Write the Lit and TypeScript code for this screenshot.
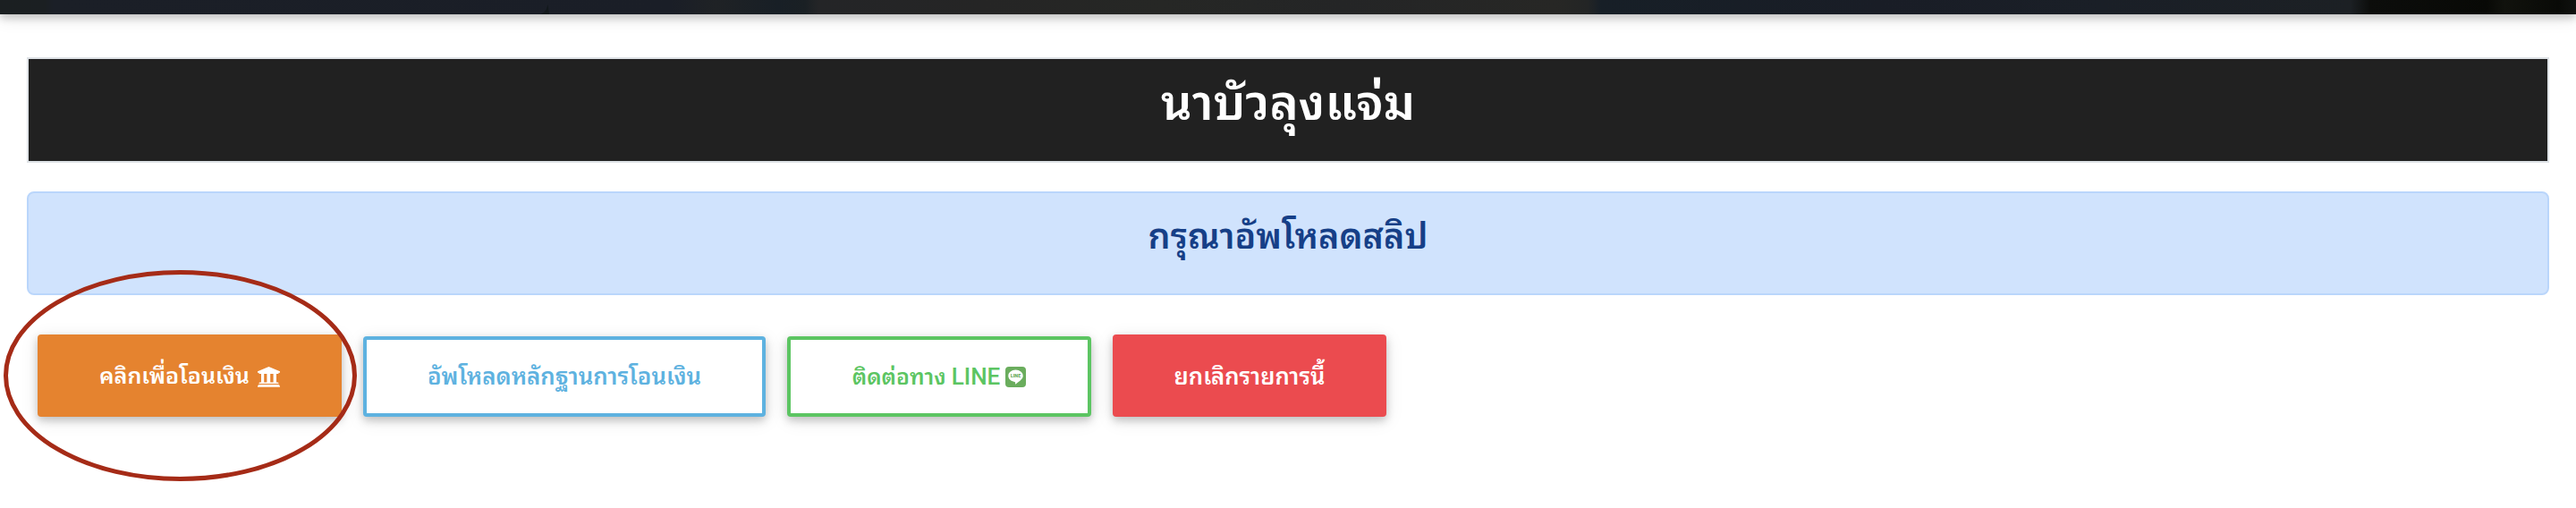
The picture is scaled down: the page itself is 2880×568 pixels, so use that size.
import { LitElement, html, css, svg } from "lit";
import { customElement } from "lit/decorators.js";

const bankIcon = svg`<path d="M12.5 0 L25 5.2 V6.8 H23.4 V8 H1.6 V6.8 H0 V5.2Z M4 8 H7.2 V17.6 H10.4 V8 H14.2 V17.6 H17.6 V8 H21 V17.6 H22.4 Q23.6 17.8 23.6 19 H1.4 Q1.4 17.8 2.6 17.6 H4Z M1.4 20 H23.6 Q25 20.4 25 22.8 H0 Q0 20.4 1.4 20Z" fill="#fff"/>`;

const lineIcon = svg`
  <rect width="23" height="23" rx="4" fill="#6aad5d"/>
  <path d="M11.5 3.6 C16 3.6 19.7 6.6 19.7 10.3 C19.7 13.4 16.8 15.8 11.6 19.4 C10.9 19.8 11 19.2 11.1 18.6 C11.3 17.4 11.1 17.1 10.3 16.9 C6.2 16.4 3.3 13.6 3.3 10.3 C3.3 6.6 7 3.6 11.5 3.6Z" fill="#fff"/>
  <text x="11.5" y="12.3" text-anchor="middle" textLength="11.4" lengthAdjust="spacingAndGlyphs" font-family="Roboto, sans-serif" font-weight="900" font-size="5.4" fill="#6aad5d">LINE</text>`;

@customElement("app-root")
export class AppRoot extends LitElement {
  static styles = css`
    :host { display: block; position: relative; height: 568px; overflow: hidden; background: #fff;
      font-family: Roboto, "Noto Sans Thai Looped", sans-serif; }
    * { box-sizing: border-box; }
    .nav { height: 16px; background: linear-gradient(90deg, #1b1f21 0, #1b1f22 50px, #1b1f27 60px, #1a1e27 750px, #1f2225 800px, #181f26 870px, #1a2024 900px, #242527 915px, #252525 1100px, #262725 1300px, #242526 1500px, #272725 1740px, #232525 1775px, #171f27 1790px, #191d26 2100px, #1a1f27 2350px, #1c2024 2628px, #0c0d0b 2650px, #080906 2780px, #11120d 2800px, #090a07 2860px, #10110f 2880px);
      box-shadow: 0 4px 10px rgba(0,0,0,.2), 0 4px 20px rgba(0,0,0,.1); }
    .nav svg { display: block; margin-left: 604px; }
    .content { display: flex; flex-direction: column; padding: 48px 30px 0; }
    .title { height: 118px; margin: 0; border: 2px solid #dee2e6; background: #212121; color: #fff; text-align: center;
      font-size: 54.6px; line-height: 98px; font-weight: 600; }
    .alert { height: 116px; margin-top: 32px; border: 2px solid #bad6fb; border-radius: 8px; background: #d0e3fd; color: #163f87;
      text-align: center; font-size: 39.4px; line-height: 97px; font-weight: 600; }
    .actions { display: flex; align-items: flex-end; gap: 24px; padding: 44px 12px 0; }
    .btn { display: flex; align-items: center; justify-content: center; height: 92px; border: 0; border-radius: 4px;
      box-shadow: 0 4px 10px rgba(0,0,0,.2), 0 4px 20px rgba(0,0,0,.1); color: #fff; font-family: inherit; font-weight: 600;
      font-size: 25.6px; line-height: 40px; white-space: nowrap; padding: 0; }
    .transfer { width: 340px; background: #e5832f; gap: 9px; font-size: 25.1px; padding-top: 2px; }
    .upload { width: 450px; height: 90px; border: 4px solid #5eb2e0; color: #5eb2e0; background: #fff; font-size: 25.8px; }
    .line { width: 340px; height: 90px; border: 4px solid #5cc562; color: #5cc562; background: #fff; gap: 6px; font-size: 24.8px; }
    .cancel { width: 306px; background: #eb4b4f; padding-top: 2px; }
    .latin { font-weight: 500; font-size: 26px; }
    .ring { position: absolute; left: 4px; top: 302px; }
  `;
  render() {
    return html`
      <div class="nav"><svg width="14" height="16"><path d="M8.5 5 L10 16 H0 Q5 14 7 10Z" fill="#12181b"/></svg></div>
      <main class="content">
        <h1 class="title">นาบัวลุงแจ่ม</h1>
        <div class="alert">กรุณาอัพโหลดสลิป</div>
        <div class="actions">
          <button class="btn transfer"><span>คลิกเพื่อโอนเงิน</span><svg width="25" height="23" viewBox="0 0 25 23">${bankIcon}</svg></button>
          <button class="btn upload"><span>อัพโหลดหลักฐานการโอนเงิน</span></button>
          <button class="btn line"><span>ติดต่อทาง <span class="latin">LINE</span></span><svg width="23" height="23" viewBox="0 0 23 23">${lineIcon}</svg></button>
          <button class="btn cancel"><span>ยกเลิกรายการนี้</span></button>
        </div>
      </main>
      <svg class="ring" width="395" height="236"><ellipse cx="197.5" cy="118" rx="195" ry="115.5" fill="none" stroke="#a52b17" stroke-width="5"/></svg>
    `;
  }
}
